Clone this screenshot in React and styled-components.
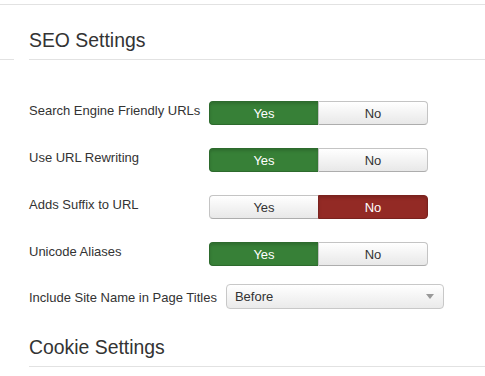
import React from 'react';
import styled, { createGlobalStyle } from 'styled-components';

const GlobalStyle = createGlobalStyle`
  body {
    margin: 0;
    background: #fff;
    font-family: "Liberation Sans", Arial, sans-serif;
    color: #333;
  }
`;

const Page = styled.div`
  width: 485px;
  height: 376px;
  overflow: hidden;
  padding-top: 4px;
  box-sizing: border-box;
`;

const TopRule = styled.div`
  border-top: 1px solid #e2e2e2;
`;

const Section = styled.div`
  padding-left: 29px;
`;

const LegendRow = styled.div`
  display: flex;
  align-items: flex-end;
  margin-left: ${p => (p.$stub ? '-29px' : '0')};
  margin-top: ${p => p.$top || 0}px;
`;

const Stub = styled.div`
  width: 14px;
  margin-right: 15px;
  border-bottom: 1px solid #e2e2e2;
`;

const Legend = styled.div`
  flex: 1;
  font-size: 19.4px;
  line-height: 38px;
  color: #333;
  border-bottom: 1px solid #e2e2e2;
`;

const Form = styled.div`
  display: flex;
  flex-direction: column;
  gap: 23px;
  padding-top: 41px;
`;

const Row = styled.div`
  display: flex;
  align-items: flex-start;
  margin-top: ${p => p.$top || 0}px;
`;

const Label = styled.div`
  min-width: 173px;
  margin-right: ${p => p.$gap || 7}px;
  font-size: 13px;
  line-height: 16px;
  padding-top: ${p => p.$pad || 0}px;
  color: #333;
  white-space: nowrap;
`;

const Group = styled.div`
  display: flex;
  width: 219px;
  height: 24px;
`;

const colours = {
  yes: { bg: '#378037', border: '#2d6a2d' },
  no: { bg: '#932a25', border: '#7a221e' },
};

const Toggle = styled.div`
  flex: 1;
  display: flex;
  align-items: center;
  justify-content: center;
  font-size: 13px;
  box-sizing: border-box;
  border: 1px solid ${p => (p.$on ? colours[p.$kind].border : '#c4c4c4')};
  border-bottom-color: ${p => (p.$on ? colours[p.$kind].border : '#adadad')};
  background: ${p =>
    p.$on
      ? colours[p.$kind].bg
      : 'linear-gradient(to bottom, #ffffff 0%, #e8e8e8 100%)'};
  color: ${p => (p.$on ? '#fff' : '#333')};
  box-shadow: ${p => (p.$on ? 'inset 0 2px 3px rgba(0,0,0,0.15)' : 'none')};
  &:first-child {
    border-radius: 4px 0 0 4px;
    border-right: none;
  }
  &:last-child {
    border-radius: 0 4px 4px 0;
  }
`;

const Select = styled.div`
  width: 218px;
  height: 25px;
  box-sizing: border-box;
  display: flex;
  align-items: center;
  justify-content: space-between;
  padding: 0 9px 0 8px;
  border: 1px solid #c8c8c8;
  border-radius: 4px;
  background: linear-gradient(to bottom, #ffffff 0%, #eaeaea 100%);
  font-size: 13px;
  color: #333;
`;

const Caret = styled.span`
  width: 0;
  height: 0;
  border-left: 4px solid transparent;
  border-right: 4px solid transparent;
  border-top: 5px solid #999;
`;

const YesNo = ({ value }) => (
  <Group>
    <Toggle $on={value} $kind="yes">Yes</Toggle>
    <Toggle $on={!value} $kind="no">No</Toggle>
  </Group>
);

const toggles = [
  ['Search Engine Friendly URLs', true],
  ['Use URL Rewriting', true],
  ['Adds Suffix to URL', false],
  ['Unicode Aliases', true],
];

export default function App() {
  return (
    <Page>
      <GlobalStyle />
      <TopRule />
      <Section>
        <LegendRow $stub $top={16}>
          <Stub />
          <Legend>SEO Settings</Legend>
        </LegendRow>
        <Form>
          {toggles.map(([label, value]) => (
            <Row key={label}>
              <Label $pad={2}>{label}</Label>
              <YesNo value={value} />
            </Row>
          ))}
        </Form>
        <Row $top={18}>
          <Label $pad={6} $gap={9}>Include Site Name in Page Titles</Label>
          <Select>
            <span>Before</span>
            <Caret />
          </Select>
        </Row>
        <LegendRow $top={19}>
          <Legend>Cookie Settings</Legend>
        </LegendRow>
      </Section>
    </Page>
  );
}
